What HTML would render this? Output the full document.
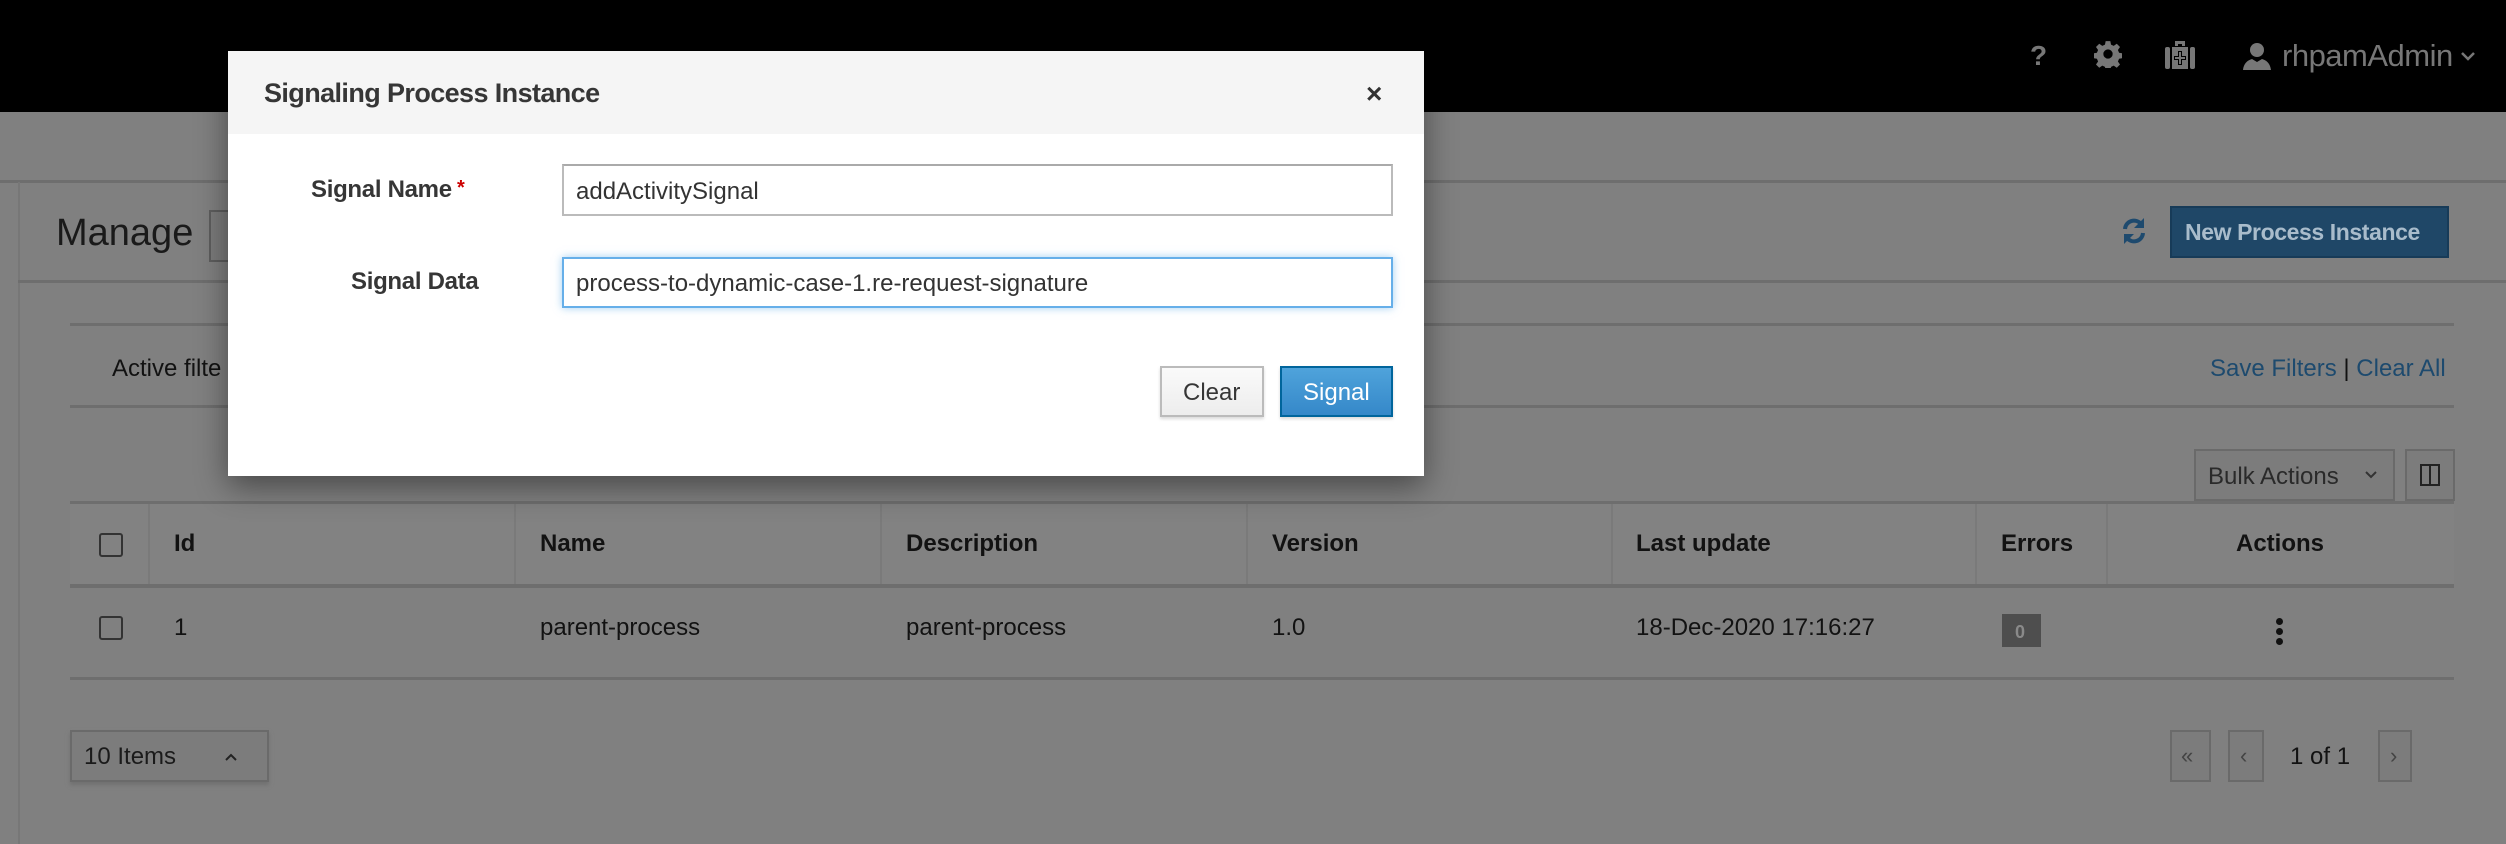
<!DOCTYPE html>
<html><head><meta charset="utf-8"><style>
*{margin:0;padding:0;box-sizing:border-box}
body{width:2506px;height:844px;position:relative;overflow:hidden;background:#808080;font-family:"Liberation Sans",sans-serif;color:#121212}
.a{position:absolute}
.t{position:absolute;white-space:nowrap;line-height:1;transform:translateY(2px)}
.hl{position:absolute;height:3px;background:#6e6e6e}
.vl{position:absolute;width:2px;background:#777}
.btn{position:absolute;border:2px solid #6a6a6a;background:#7c7c7c}
</style></head><body>
<div class="a" style="left:0;top:0;width:2506px;height:112px;background:#000"></div>
<div class="t" style="left:2030px;top:40px;font-size:28px;font-weight:bold;color:#777">?</div>
<svg class="a" style="left:2094px;top:40px" width="28" height="28" viewBox="0 0 24 24"><path fill="#777" d="M10 1h4l.6 3 2.3 1 2.6-1.8 2.8 2.8-1.8 2.6 1 2.3 3 .6v4l-3 .6-1 2.3 1.8 2.6-2.8 2.8-2.6-1.8-2.3 1-.6 3h-4l-.6-3-2.3-1-2.6 1.8-2.8-2.8 1.8-2.6-1-2.3-3-.6v-4l3-.6 1-2.3-1.8-2.6 2.8-2.8 2.6 1.8 2.3-1zM12 8a4 4 0 100 8 4 4 0 000-8z"/></svg>
<svg class="a" style="left:2165px;top:41px" width="30" height="28" viewBox="0 0 30 28"><path fill="#777" d="M10 0h10v5h-3V3h-4v2h-3z"/><rect x="0" y="6" width="5" height="22" rx="2" fill="#777"/><rect x="25" y="6" width="5" height="22" rx="2" fill="#777"/><rect x="7" y="6" width="16" height="22" fill="#777"/><path fill="#000" d="M13 10h4v5h4v4h-4v5h-4v-5H9v-4h4z"/><path fill="#777" d="M14 11h2v5h4v2h-4v5h-2v-5h-4v-2h4z"/></svg>
<svg class="a" style="left:2243px;top:42px" width="28" height="28" viewBox="0 0 28 28"><circle cx="14" cy="8" r="7" fill="#777"/><path fill="#777" d="M0 28c1-8 6-10 9-11l5 3 5-3c3 1 8 3 9 11z"/></svg>
<div class="t" style="left:2282px;top:38px;font-size:31px;color:#777;letter-spacing:-0.5px">rhpamAdmin</div>
<svg class="a" style="left:2460px;top:50px" width="16" height="12" viewBox="0 0 16 12"><path d="M2 3l6 6 6-6" stroke="#777" stroke-width="2.5" fill="none"/></svg>

<div class="hl" style="left:0;top:180px;width:2506px"></div>
<div class="vl" style="left:18px;top:182px;height:662px"></div>
<div class="hl" style="left:18px;top:280px;width:2488px"></div>
<div class="t" style="left:56px;top:212px;font-size:38px;color:#1a1a1a">Manage</div>
<div class="btn" style="left:209px;top:210px;width:40px;height:52px;border-color:#5e5e5e"></div>
<svg class="a" style="left:2120px;top:216px" width="28" height="30" viewBox="0 0 28 30"><path d="M5 13a9 9 0 0 1 16-5M23 17a9 9 0 0 1-16 5" stroke="#1e4a6e" stroke-width="4" fill="none"/><path fill="#1e4a6e" d="M24 2v10h-10zM4 28V18h10z"/></svg>
<div class="a" style="left:2170px;top:206px;width:279px;height:52px;background:#1f4767;border:2px solid #173b58"></div>
<div class="t" style="left:2185px;top:219px;font-size:23px;color:#a9bccb;font-weight:bold;letter-spacing:-0.4px">New Process Instance</div>

<div class="hl" style="left:70px;top:323px;width:2384px"></div>
<div class="hl" style="left:70px;top:405px;width:2384px"></div>
<div class="t" style="left:112px;top:355px;font-size:24px">Active filte</div>
<div class="t" style="left:2210px;top:355px;font-size:24px;color:#1d4a6e">Save Filters <span style="color:#111">|</span> Clear All</div>

<div class="btn" style="left:2194px;top:449px;width:201px;height:52px"></div>
<div class="t" style="left:2208px;top:463px;font-size:24px;color:#2a2a2a">Bulk Actions</div>
<svg class="a" style="left:2364px;top:470px" width="14" height="10" viewBox="0 0 14 10"><path d="M2 2l5 5 5-5" stroke="#333" stroke-width="2" fill="none"/></svg>
<div class="btn" style="left:2405px;top:449px;width:50px;height:52px"></div>
<div class="a" style="left:2420px;top:464px;width:20px;height:22px;border:2px solid #222"></div>
<div class="a" style="left:2429px;top:464px;width:2px;height:22px;background:#222"></div>

<div class="a" style="left:70px;top:503px;width:2384px;height:82px;background:#828282"></div>
<div class="hl" style="left:70px;top:501px;width:2384px"></div>
<div class="hl" style="left:70px;top:584px;width:2384px;height:4px"></div>
<div class="vl" style="left:148px;top:504px;height:80px;background:#7a7a7a"></div>
<div class="vl" style="left:514px;top:504px;height:80px;background:#7a7a7a"></div>
<div class="vl" style="left:880px;top:504px;height:80px;background:#7a7a7a"></div>
<div class="vl" style="left:1246px;top:504px;height:80px;background:#7a7a7a"></div>
<div class="vl" style="left:1611px;top:504px;height:80px;background:#7a7a7a"></div>
<div class="vl" style="left:1975px;top:504px;height:80px;background:#7a7a7a"></div>
<div class="vl" style="left:2106px;top:504px;height:80px;background:#7a7a7a"></div>
<div class="a" style="left:99px;top:533px;width:24px;height:24px;border:2px solid #333;border-radius:3px"></div>
<div class="t" style="left:174px;top:530px;font-size:24px;font-weight:bold">Id</div>
<div class="t" style="left:540px;top:530px;font-size:24px;font-weight:bold">Name</div>
<div class="t" style="left:906px;top:530px;font-size:24px;font-weight:bold">Description</div>
<div class="t" style="left:1272px;top:530px;font-size:24px;font-weight:bold">Version</div>
<div class="t" style="left:1636px;top:530px;font-size:24px;font-weight:bold">Last update</div>
<div class="t" style="left:2001px;top:530px;font-size:24px;font-weight:bold">Errors</div>
<div class="t" style="left:2236px;top:530px;font-size:24px;font-weight:bold">Actions</div>

<div class="a" style="left:99px;top:616px;width:24px;height:24px;border:2px solid #333;border-radius:3px"></div>
<div class="t" style="left:174px;top:614px;font-size:24px">1</div>
<div class="t" style="left:540px;top:614px;font-size:24px">parent-process</div>
<div class="t" style="left:906px;top:614px;font-size:24px">parent-process</div>
<div class="t" style="left:1272px;top:614px;font-size:24px">1.0</div>
<div class="t" style="left:1636px;top:614px;font-size:24px">18-Dec-2020 17:16:27</div>
<div class="a" style="left:2002px;top:614px;width:39px;height:33px;background:#4e4e4e"></div>
<div class="t" style="left:2015px;top:621px;font-size:18px;color:#8a8a8a;font-weight:bold">0</div>
<div class="a" style="left:2276px;top:618px;width:7px;height:7px;background:#111;border-radius:50%"></div>
<div class="a" style="left:2276px;top:628px;width:7px;height:7px;background:#111;border-radius:50%"></div>
<div class="a" style="left:2276px;top:638px;width:7px;height:7px;background:#111;border-radius:50%"></div>
<div class="hl" style="left:70px;top:677px;width:2384px"></div>

<div class="btn" style="left:70px;top:730px;width:199px;height:52px;box-shadow:0 3px 4px #707070"></div>
<div class="t" style="left:84px;top:743px;font-size:24px;color:#1a1a1a">10 Items</div>
<svg class="a" style="left:224px;top:752px" width="14" height="10" viewBox="0 0 14 10"><path d="M2 8l5-5 5 5" stroke="#222" stroke-width="2" fill="none"/></svg>
<div class="btn" style="left:2170px;top:730px;width:41px;height:52px"></div>
<div class="t" style="left:2181px;top:743px;font-size:22px;color:#444">«</div>
<div class="btn" style="left:2228px;top:730px;width:36px;height:52px"></div>
<div class="t" style="left:2240px;top:743px;font-size:22px;color:#444">‹</div>
<div class="t" style="left:2290px;top:743px;font-size:24px">1 of 1</div>
<div class="btn" style="left:2378px;top:730px;width:34px;height:52px"></div>
<div class="t" style="left:2390px;top:743px;font-size:22px;color:#444">›</div>

<!-- modal -->
<div class="a" style="left:228px;top:51px;width:1196px;height:425px;background:#fff;box-shadow:0 10px 30px rgba(0,0,0,.45)"></div>
<div class="a" style="left:228px;top:51px;width:1196px;height:83px;background:#f5f5f5"></div>
<div class="t" style="left:264px;top:78px;font-size:27px;font-weight:bold;color:#363636;letter-spacing:-0.6px">Signaling Process Instance</div>
<div class="t" style="left:1366px;top:78px;font-size:28px;font-weight:bold;color:#333">×</div>
<div class="t" style="left:311px;top:176px;font-size:24px;font-weight:bold;color:#363636;letter-spacing:-0.3px">Signal Name<span style="color:#c00;font-size:20px;vertical-align:top"> *</span></div>
<div class="t" style="left:351px;top:268px;font-size:24px;font-weight:bold;color:#363636;letter-spacing:-0.3px">Signal Data</div>
<div class="a" style="left:562px;top:164px;width:831px;height:52px;border:2px solid #bbb;border-top-color:#aaa"></div>
<div class="t" style="left:576px;top:178px;font-size:24px;color:#333">addActivitySignal</div>
<div class="a" style="left:562px;top:257px;width:831px;height:51px;border:2px solid #66afe9;box-shadow:0 0 8px rgba(102,175,233,.6)"></div>
<div class="t" style="left:576px;top:270px;font-size:24px;color:#333">process-to-dynamic-case-1.re-request-signature</div>
<div class="a" style="left:1160px;top:366px;width:104px;height:51px;border:2px solid #bbb;background:linear-gradient(#fafafa,#ededed);box-shadow:0 2px 3px rgba(0,0,0,.15)"></div>
<div class="t" style="left:1183px;top:379px;font-size:24px;color:#363636">Clear</div>
<div class="a" style="left:1280px;top:366px;width:113px;height:51px;border:2px solid #00659c;background:linear-gradient(#4fa3db,#3588c9);box-shadow:0 2px 3px rgba(0,0,0,.15)"></div>
<div class="t" style="left:1303px;top:379px;font-size:24px;color:#fff">Signal</div>
</body></html>
